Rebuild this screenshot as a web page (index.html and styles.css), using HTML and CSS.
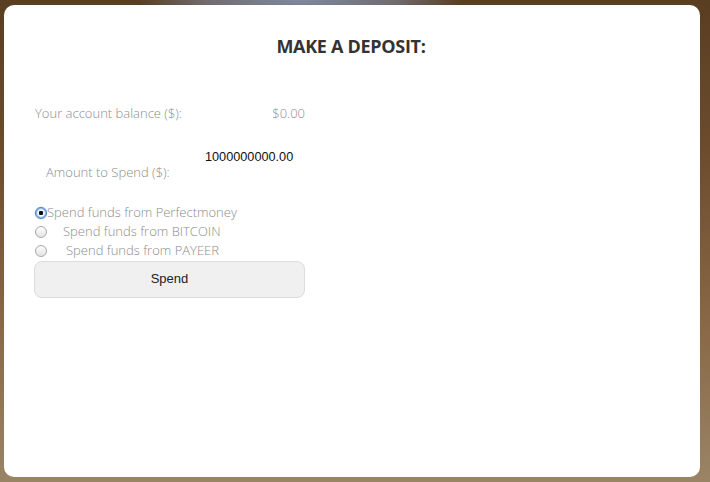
FILE: index.html
```html
<!DOCTYPE html>
<html>
<head>
<meta charset="utf-8">
<link rel="stylesheet" href="styles.css">
</head>
<body>
<div class="card">
  <h1 class="title">MAKE A DEPOSIT:</h1>
  <div class="form">
    <div class="row balance">
      <span class="label">Your account balance ($):</span>
      <span class="value">$0.00</span>
    </div>
    <div class="amount">
      <div class="amount-value">1000000000.00</div>
      <div class="label amount-label">Amount to Spend ($):</div>
    </div>
    <div class="options">
      <div class="opt"><span class="radio checked"></span><span class="label">Spend funds from Perfectmoney</span></div>
      <div class="opt"><span class="radio"></span><span class="label gap1">Spend funds from BITCOIN</span></div>
      <div class="opt"><span class="radio"></span><span class="label gap2">Spend funds from PAYEER</span></div>
    </div>
    <button class="btn">Spend</button>
  </div>
</div>
</body>
</html>
```
FILE: styles.css
```css
html, body { height: 100%; }
body {
  margin: 0;
  padding: 5px 10px 5px 4px;
  box-sizing: border-box;
  background:
    radial-gradient(ellipse 160px 30px at 300px 0px, #7e8aa0 0%, rgba(126,138,160,0.6) 60%, rgba(126,138,160,0) 100%),
    linear-gradient(180deg, #5a3e22 0%, #6b4b2c 30%, #8a6a48 70%, #9a8466 100%);
  font-family: "Open Sans", sans-serif;
}
.card {
  height: 472px;
  background: #fff;
  border-radius: 10px;
  padding: 29px 30px 0 30px;
  box-sizing: border-box;
}
.title {
  margin: 0;
  text-align: center;
  font-family: "Open Sans", sans-serif;
  font-weight: 700;
  font-size: 18px;
  line-height: 24px;
  color: #333;
  letter-spacing: -0.3px;
  padding-right: 2px;
}
.form {
  width: 271px;
  margin-top: 46px;
}
.label {
  font-family: "Open Sans", sans-serif;
  font-weight: 300;
  font-size: 13px;
  color: #8c8c8c;
}
.row {
  display: flex;
  justify-content: space-between;
  align-items: center;
  line-height: 18px;
  padding-left: 1px;
}
.value {
  font-family: "Open Sans", sans-serif;
  font-weight: 300;
  font-size: 13px;
  color: #8c8c8c;
}
.amount {
  margin-top: 28px;
}
.amount-value {
  font-family: "Liberation Sans", Arial, sans-serif;
  font-size: 12.7px;
  color: #111;
  line-height: 14px;
  padding-left: 171px;
}
.amount-label {
  padding-left: 12px;
  line-height: 18px;
  margin-top: -1px;
}
.options {
  margin-top: 22px;
}
.opt {
  display: flex;
  align-items: center;
  height: 19px;
  padding-left: 1px;
}
.opt .label { line-height: 19px; }
.gap1 { margin-left: 16px; }
.gap2 { margin-left: 19px; }
.radio {
  width: 12px;
  height: 12px;
  border-radius: 50%;
  box-sizing: border-box;
  border: 1px solid #a8a8a8;
  background: linear-gradient(180deg, #fdfdfd, #e4e4e4);
  flex: none;
}
.radio.checked {
  border-color: #4a80c8;
  background: radial-gradient(circle, #111 0 2px, #f4f8ff 2.5px 3.4px, #9fc2ee 4px);
  box-shadow: 0 0 1px #5a8fd6;
}
.btn {
  display: block;
  width: 271px;
  height: 37px;
  margin-top: 1px;
  background: #f0f0f0;
  border: 1px solid #dcdcdc;
  border-radius: 8px;
  font-family: "Liberation Sans", Arial, sans-serif;
  font-size: 13px;
  line-height: 15px;
  color: #222;
  padding: 0 0 3px 0;
}
```
